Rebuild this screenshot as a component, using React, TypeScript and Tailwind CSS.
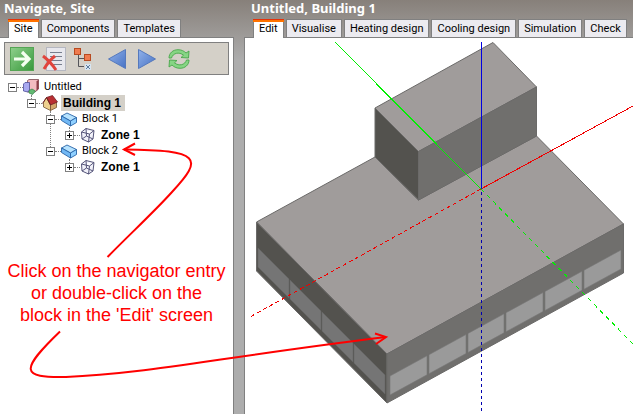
import type { ReactNode } from 'react';

function Tab({ label, active = false }: { label: string; active?: boolean }) {
  return (
    <button
      type="button"
      role="tab"
      aria-selected={active}
      className={
        active
          ? 'relative -mb-px h-[19px] border border-b-0 border-[#808080] bg-white px-[5px] font-[Roboto,sans-serif] text-[11px] leading-4 whitespace-nowrap text-black before:absolute before:-inset-x-px before:-top-px before:h-[3px] before:border-t before:border-[#e5320a] before:bg-[#ff7300]'
          : 'h-[18px] border border-b-0 border-[#808080] bg-[#ecebf0] px-[5px] font-[Roboto,sans-serif] text-[11px] leading-4 whitespace-nowrap text-black'
      }
    >
      {label}
    </button>
  );
}

function Tool({ label, className, children }: { label: string; className: string; children: ReactNode }) {
  return (
    <button type="button" aria-label={label} className={`flex h-6 shrink-0 items-center justify-center ${className}`}>
      {children}
    </button>
  );
}

function GoIcon() {
  return (
    <svg width="24" height="24" viewBox="0 0 24 24">
      <defs>
        <linearGradient id="go" x1="0" y1="0" x2="1" y2="1">
          <stop offset="0" stopColor="#8fd08c" />
          <stop offset="1" stopColor="#37983a" />
        </linearGradient>
      </defs>
      <rect x="0.5" y="0.5" width="23" height="23" fill="url(#go)" stroke="#55a454" />
      <path d="M4 12H18M12 5L19 12L12 19" fill="none" stroke="#f4fff0" strokeWidth="3.2" />
    </svg>
  );
}

function DeleteIcon() {
  return (
    <svg width="24" height="24" viewBox="0 0 24 24">
      <rect x="4.5" y="0.5" width="19" height="23" fill="#e8e8ee" stroke="#b5b7c0" />
      <path d="M8 5.5H20M8 9.5H20M8 13.5H20M8 17.5H20" stroke="#777e8e" />
      <path d="M1 9C5 12 10 17 14 23M13 9C9 12 5 17 2 22" fill="none" stroke="#e0443c" strokeWidth="3" />
    </svg>
  );
}

function HierarchyIcon() {
  return (
    <svg width="18" height="22" viewBox="0 0 18 22">
      <path d="M4.5 6V18.5H10M4.5 10.5H10" fill="none" stroke="#55555a" />
      <rect x="0.5" y="0.5" width="6" height="6" fill="#ef7b4f" stroke="#b74a20" />
      <rect x="10.5" y="6.5" width="6" height="6" fill="#ef7b4f" stroke="#b74a20" />
      <rect x="11" y="16" width="6" height="6" fill="#d7e6f3" />
      <path d="M12 17L16 21M16 17L12 21" stroke="#5b7b9d" />
    </svg>
  );
}

function ArrowIcon({ forward = false }: { forward?: boolean }) {
  return (
    <svg width="18" height="20" viewBox="0 0 18 20">
      <defs>
        <linearGradient id="nav" x1="0" y1="0" x2="1" y2="1">
          <stop offset="0" stopColor="#91b2ea" />
          <stop offset="1" stopColor="#4772c4" />
        </linearGradient>
      </defs>
      <path d={forward ? 'M0.5 0.5V19.5L17.5 10Z' : 'M17.5 0.5V19.5L0.5 10Z'} fill="url(#nav)" stroke="#5579bd" />
    </svg>
  );
}

function RefreshIcon() {
  return (
    <svg width="22" height="20" viewBox="0 0 22 20">
      <g fill="#86d584" stroke="#48a64b" strokeWidth="0.9">
        <path d="M1 9C1 4 5 .7 10 .7C13.5.7 16 2 18 4L21 2L20.5 9L13 8.5L15.5 6.2C11 2.5 5 4 3.5 9Z" />
        <path d="M21 11C21 16 17 19.3 12 19.3C8.500 19.300 6 18 4 16L1 18L1.500 11L9 11.500L6.500 13.800C11 17.500 17 16 18.500 11Z" />
      </g>
    </svg>
  );
}

function SiteIcon() {
  return (
    <svg width="16" height="16" viewBox="0 0 16 16">
      <path d="M4.500 1.500L6 0.500H15.500V10L12 13H4.500Z" fill="#f3bcc0" stroke="#7a4a52" strokeWidth="0.8" />
      <path d="M13.500 2.500L15.500 0.500V10L13.500 12Z" fill="#8d3d47" />
      <path d="M0.500 5L2 3.500H6.500V11L5 13L0.500 12Z" fill="#a9a9f0" stroke="#4d4d98" strokeWidth="0.8" />
      <path d="M6 11.500L9 10L12.500 12L9.500 15.500L6 14Z" fill="#63ba72" stroke="#34804a" strokeWidth="0.7" />
    </svg>
  );
}

function HouseIcon() {
  return (
    <svg width="16" height="16" viewBox="0 0 16 16">
      <path d="M1.500 7.500L4.500 2.500L8.500 9V15.500L1.500 12Z" fill="#eed08e" stroke="#745030" strokeWidth="0.8" />
      <path d="M8.500 9L14.500 7V12.500L8.500 15.500Z" fill="#d3a86c" stroke="#745030" strokeWidth="0.8" />
      <path d="M4.500 2.500L10.500 0.500L15.500 7L8.500 10Z" fill="#b92f32" stroke="#702326" strokeWidth="0.8" />
      <path d="M0.500 8.500L4.500 2.500L8.500 10" fill="none" stroke="#702326" />
    </svg>
  );
}

function BlockIcon() {
  return (
    <svg width="16" height="16" viewBox="0 0 16 16">
      <g stroke="#2864a8" strokeWidth="0.9" strokeLinejoin="round">
        <path d="M0.500 5L6 2L15.500 6.500L9.500 10Z" fill="#b6e3ff" />
        <path d="M0.500 5L9.500 10V15L0.500 9.500Z" fill="#72b8f4" />
        <path d="M9.500 10L15.500 6.500V11.500L9.500 15Z" fill="#8fd0ff" />
      </g>
    </svg>
  );
}

function ZoneIcon() {
  return (
    <svg width="16" height="16" viewBox="0 0 16 16">
      <path
        d="M1.500 5L6 1.500L14 3.500L13 12L8.500 15L2 12ZM1.500 5L9.500 7L14 3.500M9.500 7L8.500 15M6 1.500L6.500 9L2 12M6.500 9L13 12"
        fill="#f2f2fa"
        stroke="#55557a"
        strokeLinejoin="round"
      />
    </svg>
  );
}

type NodeProps = {
  label: string;
  icon: ReactNode;
  open?: boolean;
  bold?: boolean;
  selected?: boolean;
  branch?: string;
  children?: ReactNode;
};

function TreeNode({ label, icon, open = false, bold = false, selected = false, branch = 'h-2', children }: NodeProps) {
  return (
    <li role="treeitem" aria-expanded={open} aria-selected={selected}>
      <div className="flex h-4 items-center">
        <button
          type="button"
          aria-label={`Toggle ${label}`}
          className="relative z-10 flex size-[9px] shrink-0 items-center justify-center border border-[#808080] bg-white"
        >
          <svg width="5" height="5" viewBox="0 0 5 5">
            <path d={open ? 'M0 2.5H5' : 'M0 2.5H5M2.5 0V5'} stroke="#000" />
          </svg>
        </button>
        <span className="w-1.5 shrink-0 border-t border-dotted border-[#808080]" />
        <span className="shrink-0">{icon}</span>
        <button
          type="button"
          className={`ml-[3px] h-4 px-0.5 leading-4 whitespace-nowrap ${
            bold ? "font-['Liberation_Sans',Arial,sans-serif] text-[12px] font-bold" : 'font-[Roboto,sans-serif] text-[11px]'
          } ${selected ? 'bg-[#d4d0c8] pr-1' : ''}`}
        >
          {label}
        </button>
      </div>
      {children && (
        <ul role="group" className="relative pl-[19px]">
          <span className={`absolute top-0 left-[23px] border-l border-dotted border-[#808080] ${branch}`} />
          {children}
        </ul>
      )}
    </li>
  );
}

const leftPanes = [
  [258, 289],
  [290, 321],
  [322, 353],
  [354, 385],
];
const rightPanes = [
  [390, 427],
  [429, 466],
  [468, 504],
  [506, 543],
  [545, 582],
  [584, 621],
];

function BuildingModel() {
  const leftY = (x: number) => 248 + (x - 258);
  const rightY = (x: number) => 376 - (x - 390) * 0.5455;
  return (
    <svg width="388" height="376" viewBox="245 38 388 376" role="img" aria-label="Building 1 model" className="block">
      <g stroke="#6b6a69" strokeLinejoin="round">
        <path d="M256.500 222L375 157L418.500 200L536.500 136L623.500 224L387 354Z" fill="#a09c9b" />
        <path d="M256.500 222L387 354V403L256.500 271Z" fill="#53524e" />
        <path d="M387 354L623.500 224V273L387 403Z" fill="#706f6d" />
        <path d="M375 108L493 42.500L536.500 87L418.500 151.500Z" fill="#a09c9b" />
        <path d="M375 108L418.500 151.500V200L375 157Z" fill="#53524e" />
        <path d="M418.500 151.500L536.500 87V136L418.500 200Z" fill="#706f6d" />
      </g>
      {leftPanes.map(([a, b]) => (
        <path key={a} d={`M${a} ${leftY(a)}L${b} ${leftY(b)}V${leftY(b) + 19}L${a} ${leftY(a) + 19}Z`} fill="#757575" stroke="#666" strokeWidth="0.6" />
      ))}
      {rightPanes.map(([a, b]) => (
        <path key={a} d={`M${a} ${rightY(a)}L${b} ${rightY(b)}V${rightY(b) + 19}L${a} ${rightY(a) + 19}Z`} fill="#9a9a9a" stroke="#777" strokeWidth="0.6" />
      ))}
      <g fill="none" shapeRendering="crispEdges">
        <path d="M335 42L481 189" stroke="#00f000" />
        <path d="M481 189L633 344" stroke="#00f000" strokeDasharray="4.500 4" />
        <path d="M481 189L633 106" stroke="#f00000" />
        <path d="M481 189L249 317.500" stroke="#f00000" strokeDasharray="4 3" />
        <path d="M481.500 42V189" stroke="#0000e0" />
        <path d="M481.500 192V412" stroke="#0000b0" strokeDasharray="3 3" />
      </g>
    </svg>
  );
}

function Callouts() {
  return (
    <svg width="633" height="414" viewBox="0 0 633 414" aria-hidden="true" className="pointer-events-none absolute top-0 left-0">
      <g fill="none" stroke="#f00" strokeWidth="2">
        <path d="M107.500 257C130 234 155 211 172 192C204 158 201 150 124 149.500" />
        <path d="M135 143.500L124 149.500L135 155" />
        <path d="M60 331.500C20 370 20 378 66 377C145 374 215 358 386 337" />
        <path d="M375 333.500L386 337L376 344" />
      </g>
    </svg>
  );
}

export default function App() {
  const title = "h-[19px] text-[13px] leading-4 font-bold text-white whitespace-nowrap font-['Noto_Sans',Verdana,sans-serif]";
  return (
    <div className="relative flex min-h-screen gap-2.5 overflow-hidden bg-[#adadad] bg-[linear-gradient(#87807a_0px,#adadad_60px)]">
      <aside className="flex w-[234px] shrink-0 flex-col">
        <h2 className={`${title} pl-1`}>Navigate, Site</h2>
        <div role="tablist" aria-label="Navigator" className="flex gap-0.5 pl-2">
          <Tab label="Site" active />
          <Tab label="Components" />
          <Tab label="Templates" />
        </div>
        <div className="grow border-t border-r border-[#808080] bg-white pt-1 pl-1">
          <div role="toolbar" aria-label="Navigator tools" className="mr-1 flex h-[33px] items-center border border-[#808080] bg-[#d4d0c8] pl-[5px]">
            <Tool label="Go" className="w-6"><GoIcon /></Tool>
            <Tool label="Delete" className="ml-2 w-6"><DeleteIcon /></Tool>
            <Tool label="Hierarchy" className="ml-2 w-[18px]"><HierarchyIcon /></Tool>
            <Tool label="Back" className="ml-4 w-[18px]"><ArrowIcon /></Tool>
            <Tool label="Forward" className="ml-3 w-[18px]"><ArrowIcon forward /></Tool>
            <Tool label="Refresh" className="ml-3 w-[22px]"><RefreshIcon /></Tool>
          </div>
          <ul role="tree" aria-label="Site" className="pt-1 pl-1">
            <TreeNode label="Untitled" icon={<SiteIcon />} open>
              <TreeNode label="Building 1" icon={<HouseIcon />} open bold selected branch="h-10">
                <TreeNode label="Block 1" icon={<BlockIcon />} open>
                  <TreeNode label="Zone 1" icon={<ZoneIcon />} bold />
                </TreeNode>
                <TreeNode label="Block 2" icon={<BlockIcon />} open>
                  <TreeNode label="Zone 1" icon={<ZoneIcon />} bold />
                </TreeNode>
              </TreeNode>
            </TreeNode>
          </ul>
          <p className="mt-[85px] pr-1 text-center font-['Liberation_Sans',Arial,sans-serif] text-[18px] leading-[22px] whitespace-nowrap text-[#f00]">
            Click on the navigator entry
            <br />
            or double-click on the
            <br />
            block in the 'Edit' screen
          </p>
        </div>
      </aside>
      <main className="flex min-w-0 flex-1 flex-col">
        <h2 className={`${title} pl-[7px]`}>Untitled, Building 1</h2>
        <div role="tablist" aria-label="Building" className="flex gap-0.5 pl-[9px]">
          <Tab label="Edit" active />
          <Tab label="Visualise" />
          <Tab label="Heating design" />
          <Tab label="Cooling design" />
          <Tab label="Simulation" />
          <Tab label="Check" />
        </div>
        <div className="grow border-t border-l border-[#808080] bg-white">
          <BuildingModel />
        </div>
      </main>
      <Callouts />
    </div>
  );
}
